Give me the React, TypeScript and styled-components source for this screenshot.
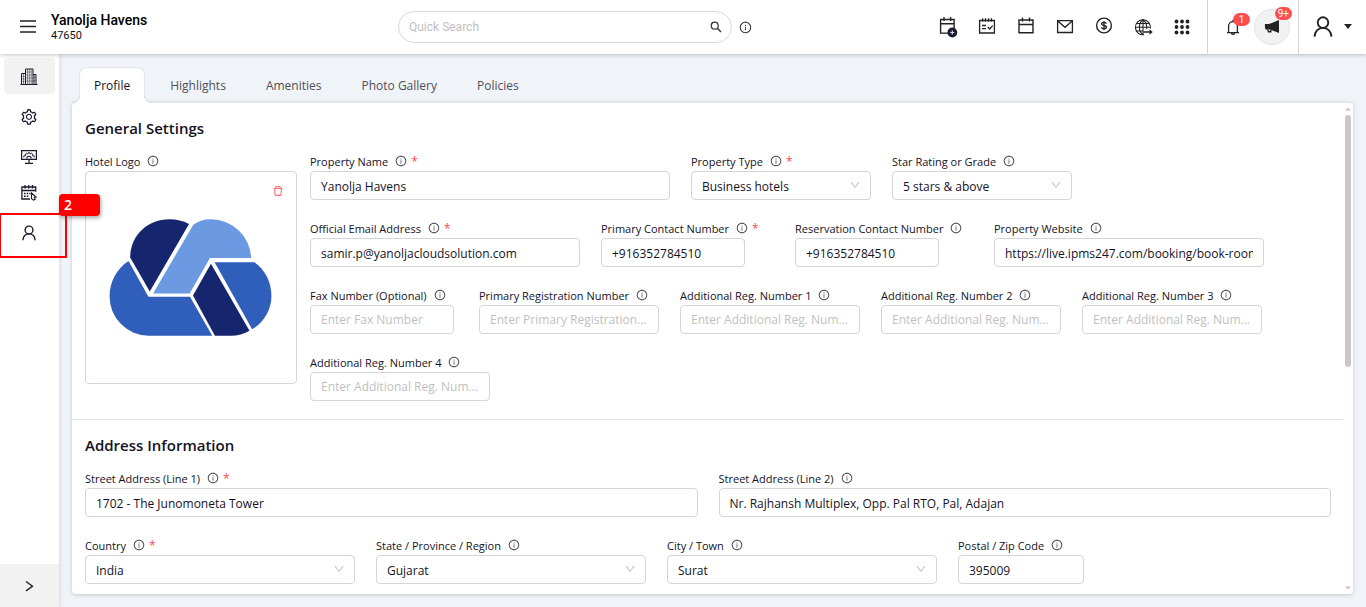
import React from "react";
import styled, { createGlobalStyle, css } from "styled-components";
import {
  AiOutlineDelete,
  AiOutlineDown,
  AiOutlineInfoCircle,
  AiOutlineSetting,
} from "react-icons/ai";

const GlobalStyle = createGlobalStyle`
  *, *::before, *::after { box-sizing: border-box; }
  body {
    margin: 0;
    background: #f0f4f8;
    color: #14121f;
    font-family: "Open Sans", "Noto Sans", sans-serif;
    font-size: 11px;
  }
  button, input, select { font: inherit; color: inherit; }
  button { padding: 0; border: 0; background: none; cursor: pointer; }
`;

/* ---------- page shell ---------- */

const Page = styled.div`
  display: flex;
  flex-direction: column;
  height: 100vh;
`;

const Header = styled.header`
  position: relative;
  z-index: 2;
  display: grid;
  grid-template-columns: 378px minmax(0, 1fr) auto;
  align-items: center;
  height: 54px;
  padding-left: 20px;
  background: #fff;
  box-shadow: 0 1px 4px rgba(20, 40, 50, 0.28);
  font-family: Roboto, sans-serif;
  flex: none;
`;

const Brand = styled.div`
  display: flex;
  align-items: center;
  gap: 15px;
`;

const BrandName = styled.div`
  color: #000;
  font-size: 14px;
  font-weight: 500;
  line-height: 16px;
`;

const BrandCode = styled.div`
  color: #111;
  font-size: 11px;
  line-height: 15px;
`;

const IconButton = styled.button`
  display: flex;
  align-items: center;
  justify-content: center;
  color: #222;
`;

const SearchArea = styled.div`
  display: flex;
  align-items: center;
  gap: 7px;
`;

const SearchBox = styled.label`
  display: flex;
  align-items: center;
  width: 334px;
  height: 32px;
  padding: 0 9px 0 10px;
  border: 1px solid #d9d9d9;
  border-radius: 16px;
`;

const SearchInput = styled.input`
  flex: 1;
  min-width: 0;
  padding: 0;
  border: 0;
  outline: 0;
  background: none;
  font-size: 12px;
  &::placeholder { color: #bfbfbf; }
`;

const HeaderRight = styled.div`
  display: flex;
  align-self: stretch;
`;

const Shortcuts = styled.nav`
  display: flex;
  align-items: center;
  gap: 15px;
  padding-right: 13px;
`;

const Alerts = styled.div`
  display: flex;
  align-items: center;
  gap: 9px;
  padding: 0 8px 0 13px;
  border-left: 1px solid #d4d4d4;
  border-right: 1px solid #d4d4d4;
`;

const AlertButton = styled(IconButton)<{ $round?: boolean }>`
  position: relative;
  width: 24px;
  height: 24px;
  ${(p) =>
    p.$round &&
    css`
      width: 36px;
      height: 36px;
      border: 1px solid #e4e4e4;
      border-radius: 50%;
      background: #f2f2f2;
    `}
`;

const Badge = styled.span<{ $top: number; $right: number }>`
  position: absolute;
  top: ${(p) => p.$top}px;
  right: ${(p) => p.$right}px;
  min-width: 17px;
  height: 13px;
  padding: 0 3px;
  border-radius: 7px;
  background: #ff4d4f;
  color: #fff;
  font-size: 10px;
  line-height: 13px;
  text-align: center;
`;

const Account = styled.button`
  display: flex;
  align-items: center;
  gap: 9px;
  padding: 0 14px 0 12px;
  color: #222;
`;

const Body = styled.div`
  display: flex;
  flex: 1;
  min-height: 0;
`;

/* ---------- side navigation ---------- */

const Sidebar = styled.aside`
  position: relative;
  z-index: 1;
  display: flex;
  flex-direction: column;
  justify-content: space-between;
  width: 59px;
  flex: none;
  background: #fff;
  box-shadow: 1px 0 4px rgba(20, 40, 50, 0.12);
`;

const NavList = styled.nav`
  display: flex;
  flex-direction: column;
  gap: 3px;
  padding: 4px;
`;

const NavItem = styled.div`
  position: relative;
`;

const NavButton = styled.button<{ $active?: boolean }>`
  display: flex;
  align-items: center;
  justify-content: center;
  width: 100%;
  height: 36px;
  padding-right: 2px;
  border-radius: 4px;
  background: ${(p) => (p.$active ? "#f2f2f2" : "transparent")};
  color: #1c1a2e;
`;

const Expand = styled.button`
  display: flex;
  align-items: center;
  justify-content: center;
  height: 43px;
  background: #f2f2f2;
  color: #222;
`;

const Highlight = styled.div`
  position: absolute;
  top: -1px;
  left: -5px;
  width: 68px;
  height: 45px;
  border: 2px solid #f00;
  pointer-events: none;
`;

const StepTag = styled.div`
  position: absolute;
  top: -20px;
  left: 55px;
  width: 41px;
  height: 22px;
  padding-left: 5px;
  border-radius: 4px;
  background: #f00;
  box-shadow: 1px 2px 4px rgba(0, 0, 0, 0.35);
  color: #fff;
  font-size: 14px;
  font-weight: 600;
  line-height: 22px;
`;

/* ---------- tabs and panel ---------- */

const Main = styled.main`
  display: flex;
  flex: 1;
  flex-direction: column;
  min-width: 0;
  padding: 13px;
`;

const Tabs = styled.div`
  position: relative;
  z-index: 1;
  display: flex;
  gap: 10px;
  padding-left: 7px;
  margin-bottom: -1px;
`;

const Tab = styled.button<{ $active?: boolean }>`
  position: relative;
  height: 36px;
  padding: 0 14px;
  border: 1px solid transparent;
  border-bottom: 0;
  border-radius: 8px 8px 0 0;
  color: #4f4f58;
  font-size: 12px;
  ${(p) =>
    p.$active &&
    css`
      border-color: #e2e4e7;
      background: #fff;
      color: #14121f;
      &::before,
      &::after {
        content: "";
        position: absolute;
        bottom: 0;
        width: 8px;
        height: 8px;
        border-bottom: 1px solid #d9dce0;
      }
      &::before {
        right: 100%;
        border-right: 1px solid #d9dce0;
        border-bottom-right-radius: 8px;
        box-shadow: 3px 3px 0 #fff;
        clip-path: inset(0 -1px 0 0);
      }
      &::after {
        left: 100%;
        border-left: 1px solid #d9dce0;
        border-bottom-left-radius: 8px;
        box-shadow: -3px 3px 0 #fff;
        clip-path: inset(0 0 0 -1px);
      }
    `}
`;

const Panel = styled.section`
  display: flex;
  flex: 1;
  min-height: 0;
  border-top: 1px solid #dfe1e4;
  border-radius: 4px;
  background: #fff;
  box-shadow: 0 1px 4px rgba(20, 40, 50, 0.2);
`;

const PanelContent = styled.form`
  flex: 1;
  min-width: 0;
  overflow: hidden;
`;

const Scrollbar = styled.div`
  display: flex;
  flex-direction: column;
  align-items: center;
  gap: 4px;
  width: 10px;
  padding: 4px 0;
  color: #c4c4c4;
`;

const Track = styled.div`
  flex: 1;
`;

const Thumb = styled.div`
  width: 6px;
  height: 54%;
  border-radius: 3px;
  background: #c8c8c8;
`;

const Section = styled.section`
  padding: 15px 12px 18px 13px;
  & + & { border-top: 1px solid #e2e4e7; }
`;

const SectionTitle = styled.h2`
  margin: 0 0 15px;
  font-size: 15px;
  font-weight: 600;
  line-height: 20px;
`;

const WithLogo = styled.div`
  display: flex;
  gap: 13px;
`;

const Rows = styled.div`
  display: flex;
  flex: 1;
  flex-direction: column;
  gap: 20px;
  min-width: 0;
`;

const Row = styled.div`
  display: flex;
  gap: 21px;
`;

const Cell = styled.div<{ $width?: number }>`
  ${(p) => (p.$width ? `flex: 0 0 ${p.$width}px;` : "flex: 1;")}
  min-width: 0;
`;

const LabelLine = styled.div`
  display: flex;
  align-items: center;
  height: 18px;
  padding-bottom: 1px;
  white-space: nowrap;
`;

const Info = styled(AiOutlineInfoCircle)`
  flex: none;
  width: 12px;
  height: 12px;
  margin: 0 4px 1px 7px;
  color: #45444f;
`;

const Required = styled.span`
  color: #ff4d4f;
  font-size: 12px;
`;

const control = css`
  display: block;
  width: 100%;
  height: 29px;
  padding: 2px 10px 0;
  border: 1px solid #d4d5d8;
  border-radius: 4px;
  outline: 0;
  background: #fff;
  font-size: 12px;
`;

const Input = styled.input<{ $width?: number }>`
  ${control}
  ${(p) => p.$width && `width: ${p.$width}px;`}
  &::placeholder { color: #bfbfbf; }
  &:placeholder-shown {
    padding-top: 0;
    text-overflow: ellipsis;
  }
`;

const SelectWrap = styled.div`
  position: relative;
`;

const Select = styled.select`
  ${control}
  appearance: none;
`;

const Chevron = styled(AiOutlineDown)`
  position: absolute;
  top: 8px;
  right: 10px;
  width: 12px;
  height: 12px;
  color: #bfbfbf;
  pointer-events: none;
`;

const LogoBox = styled.div`
  position: relative;
  display: flex;
  align-items: center;
  justify-content: center;
  height: 213px;
  padding-right: 2px;
  border: 1px solid #d4d5d8;
  border-radius: 4px;
`;

const DeleteLogo = styled(IconButton)`
  position: absolute;
  top: 13px;
  right: 12px;
  color: #ff4d4f;
`;

/* ---------- drawings ---------- */

type IconProps = { size?: number; children: React.ReactNode; stroke?: number; box?: number };

const Icon = ({ size = 24, box = 24, stroke = 1.4, children }: IconProps) => (
  <svg
    width={size}
    height={size}
    viewBox={`0 0 ${box} ${box}`}
    fill="none"
    stroke="currentColor"
    strokeWidth={stroke}
    aria-hidden="true"
  >
    {children}
  </svg>
);

const MenuIcon = () => (
  <Icon size={16} box={16}>
    <path d="M0 2h16M0 7.500h16M0 13h16" />
  </Icon>
);

const SearchIcon = () => (
  <Icon size={12} box={12} stroke={1.2}>
    <circle cx="4.7" cy="4.7" r="3.500" stroke="#333" />
    <path d="M7.3 7.3l3.700 3.700" stroke="#333" strokeWidth="1.500" />
  </Icon>
);

const CalendarAddIcon = () => (
  <Icon>
    <path d="M4.6 4.500h13.500v13.600h-13.500zM4.6 8.700h13.500M8 2v4M14.600 2v4" />
    <circle cx="16.300" cy="17.500" r="4.900" fill="#1c1a2e" stroke="none" />
    <path d="M16.300 15.500v4M14.300 17.500h4" stroke="#d8d8e8" strokeWidth="1.200" />
  </Icon>
);

const CalendarCheckIcon = () => (
  <Icon>
    <path d="M4.6 5.500h14.800v12.500H4.600zM7.600 3.200v3.600M10.500 3.200v3.600M13.500 3.200v3.600M16.400 3.200v3.600" strokeWidth="1.300" />
    <path d="M7 10.500h4M7 13.600h4M12.700 12l2 2 3-3.400" strokeWidth="1.300" />
  </Icon>
);

const CalendarIcon = () => (
  <Icon>
    <path d="M5 5h14v12.800H5zM5 9.500h14M8.500 2.400v4M15.500 2.400v4" />
  </Icon>
);

const MailIcon = () => (
  <Icon>
    <path d="M4.600 5.700h14.800v11.800H4.600zM4.800 5.900l7.200 6.400 7.200-6.400" strokeWidth="1.300" />
  </Icon>
);

const DollarIcon = () => (
  <Icon>
    <circle cx="12" cy="10.500" r="7.400" />
    <path
      d="M14.400 8.800c-.3-1-1.200-1.500-2.400-1.500-1.400 0-2.400.6-2.400 1.700 0 2.100 4.900.9 4.900 3.100 0 1-1 1.700-2.500 1.700-1.300 0-2.300-.6-2.500-1.700M12 5.900v9.300"
      strokeWidth="1.300"
    />
  </Icon>
);

const GlobeIcon = () => (
  <Icon stroke={1.1}>
    <path d="M19.300 13.500A7.500 7.500 0 1 0 13 19.700" />
    <path d="M12 19.700C7.300 17 7.300 7.500 12 4.800C15 6.700 16 10 15.700 14M12 4.800v14.900M4.500 12.200h14.800M5.700 8.500h12.600M5.700 16h6" />
    <path d="M12.500 17h6.500" strokeWidth="1.500" />
    <path d="M18.500 14.300l3.200 2.700-3.200 2.700z" fill="currentColor" stroke="none" />
  </Icon>
);

const GridIcon = () => (
  <Icon>
    {[6.5, 12, 17.5].map((y) =>
      [6.5, 12, 17.5].map((x) => (
        <circle key={`${x}-${y}`} cx={x} cy={y} r="1.900" fill="currentColor" stroke="none" />
      ))
    )}
  </Icon>
);

const BellIcon = () => (
  <Icon stroke={1.3}>
    <path d="M7.600 17.500V11a4.400 4.400 0 0 1 8.800 0v6.500M6 17.700h12M12 4.800v2M10.400 18.200a1.700 1.700 0 0 0 3.200 0" />
  </Icon>
);

const MegaphoneIcon = () => (
  <Icon size={18} box={18}>
    <path d="M2 6h4.200L16 2v13l-9-3.400H2.600Q1.500 9 2 6z" fill="currentColor" stroke="none" />
    <path d="M4.600 11.500l1 2.300h2.200v-2" />
  </Icon>
);

const UserIcon = () => (
  <Icon stroke={1.9}>
    <circle cx="12" cy="7.600" r="5.300" />
    <path d="M3.500 21.600c.3-5 3.600-8.700 8.500-8.700s8.200 3.700 8.500 8.700" />
  </Icon>
);

const NavUserIcon = () => (
  <Icon>
    <circle cx="12" cy="10" r="3.900" />
    <path d="M5.900 20.200c.3-3.700 2.600-6.300 6.100-6.300s5.800 2.600 6.100 6.300" />
  </Icon>
);

const CaretIcon = () => (
  <svg width="8" height="6" viewBox="0 0 8 6" aria-hidden="true">
    <path d="M0 0h8L4 5z" fill="currentColor" />
  </svg>
);

const BuildingIcon = () => (
  <Icon stroke={1}>
    <path d="M8.500 20.500v-15.500h7.500v15.500M4.500 20.500v-11h4M16 10.500h3v10M3.500 20.500h17" />
    <path d="M10.500 5v15M12.300 5v15M14.200 5v15M6.500 10v10M17.500 11v9" strokeWidth="1" opacity="0.500" />
    <path d="M9 8h7M9 11h7M9 14h7M9 17h7M5 12.500h3M5 15h3M5 17.500h3M16 13.500h3M16 16.500h3" strokeWidth="0.700" opacity="0.500" />
  </Icon>
);

const GearIcon = () => (
  <Icon stroke={0}>
    <AiOutlineSetting x={3} y={5} size={18} />
  </Icon>
);

const MonitorIcon = () => (
  <Icon stroke={1.2}>
    <path d="M4.600 8.600h14.800v8.800H4.600zM12 18v3.300M8 21.400h8" />
    <path d="M6.800 15.400v-1.500l1.900-.3-.4-1.500 1.300-.9 1.100.9.500-1.300h1.600l.5 1.300 1.100-.9 1.300.9-.4 1.500 1.900.3v1.500" strokeWidth="1" />
    <path d="M9.800 16.500a2.200 2.200 0 0 1 4.400 0" strokeWidth="1.100" />
  </Icon>
);

const CalendarPickIcon = () => (
  <Icon stroke={1.3}>
    <path d="M13 18H4.900V6h13.800v4.800M4.900 9.500h13.800M8 4v3.500M11.700 4v3.500M15.500 4v3.500" />
    <path d="M7 12.500h1.600M9.700 12.500h1.600M12.300 12.500h1.300M7 15.200h1.600M9.700 15.200h1.600" strokeWidth="1.500" />
    <path d="M14.500 12l4.500 4-1.700.4.900 1.900-1.800.8-1.900-1.300z" strokeWidth="1.100" />
  </Icon>
);

const ExpandIcon = () => (
  <Icon size={12} box={12}>
    <path d="M2 1.500l6.500 4.700-6.500 4.700" />
  </Icon>
);

const CloudLogo = () => (
  <svg width="163" height="117" viewBox="99 206 489 352" role="img" aria-label="Hotel logo">
    <path fill="#16266e" d="M162 322C162 256 214 207 280 207Q312 207 339 221L221 424Z" />
    <path fill="#6b99e2" d="M352 223Q376 207 405 207A121 121 0 0 1 526 323H402L341 430H231Z" />
    <path fill="#2f5fbb" d="M157 332L217 440H342L409 557H218A118 118 0 0 1 100 438C100 395 122 355 157 332Z" />
    <path fill="#16266e" d="M405 341L521 542Q495 557 466 557H417L351 436Z" />
    <path fill="#2f5fbb" d="M416 336H536C567 358 587 395 587 438C587 480 564 517 529 538Z" />
  </svg>
);

/* ---------- form parts ---------- */

type FieldProps = {
  id: string;
  label: string;
  required?: boolean;
  width?: number;
  inputWidth?: number;
  value?: string;
  placeholder?: string;
  select?: boolean;
};

const Field = ({ id, label, required, width, inputWidth, value, placeholder, select }: FieldProps) => (
  <Cell $width={width}>
    <LabelLine>
      <label htmlFor={id}>{label}</label>
      <Info />
      {required && <Required>*</Required>}
    </LabelLine>
    {select ? (
      <SelectWrap>
        <Select id={id} defaultValue={value}>
          <option>{value}</option>
        </Select>
        <Chevron />
      </SelectWrap>
    ) : (
      <Input id={id} $width={inputWidth} defaultValue={value} placeholder={placeholder} />
    )}
  </Cell>
);

const shortcuts = [
  { name: "Add reservation", icon: <CalendarAddIcon /> },
  { name: "Bookings", icon: <CalendarCheckIcon /> },
  { name: "Calendar", icon: <CalendarIcon /> },
  { name: "Mail", icon: <MailIcon /> },
  { name: "Rates", icon: <DollarIcon /> },
  { name: "Web", icon: <GlobeIcon /> },
  { name: "Apps", icon: <GridIcon /> },
];

const navItems = [
  { name: "Property", icon: <BuildingIcon />, active: true },
  { name: "Settings", icon: <GearIcon /> },
  { name: "Display", icon: <MonitorIcon /> },
  { name: "Reservations", icon: <CalendarPickIcon /> },
  { name: "Users", icon: <NavUserIcon />, step: "2" },
];

const tabs = ["Profile", "Highlights", "Amenities", "Photo Gallery", "Policies"];

export default function App() {
  return (
    <>
      <GlobalStyle />
      <Page>
        <Header>
          <Brand>
            <IconButton aria-label="Menu">
              <MenuIcon />
            </IconButton>
            <div>
              <BrandName>Yanolja Havens</BrandName>
              <BrandCode>47650</BrandCode>
            </div>
          </Brand>
          <SearchArea>
            <SearchBox>
              <SearchInput aria-label="Quick Search" placeholder="Quick Search" />
              <SearchIcon />
            </SearchBox>
            <IconButton aria-label="Search help">
              <AiOutlineInfoCircle size={13} />
            </IconButton>
          </SearchArea>
          <HeaderRight>
            <Shortcuts>
              {shortcuts.map((s) => (
                <IconButton key={s.name} aria-label={s.name}>
                  {s.icon}
                </IconButton>
              ))}
            </Shortcuts>
            <Alerts>
              <AlertButton aria-label="Notifications">
                <BellIcon />
                <Badge $top={-2} $right={-5}>1</Badge>
              </AlertButton>
              <AlertButton $round aria-label="Announcements">
                <MegaphoneIcon />
                <Badge $top={-3} $right={-3}>9+</Badge>
              </AlertButton>
            </Alerts>
            <Account aria-label="Account">
              <UserIcon />
              <CaretIcon />
            </Account>
          </HeaderRight>
        </Header>
        <Body>
          <Sidebar>
            <NavList>
              {navItems.map((n) => (
                <NavItem key={n.name}>
                  <NavButton $active={n.active} aria-label={n.name}>
                    {n.icon}
                  </NavButton>
                  {n.step && (
                    <>
                      <Highlight />
                      <StepTag>{n.step}</StepTag>
                    </>
                  )}
                </NavItem>
              ))}
            </NavList>
            <Expand aria-label="Expand">
              <ExpandIcon />
            </Expand>
          </Sidebar>
          <Main>
            <Tabs role="tablist">
              {tabs.map((t, i) => (
                <Tab key={t} role="tab" aria-selected={i === 0} $active={i === 0}>
                  {t}
                </Tab>
              ))}
            </Tabs>
            <Panel>
              <PanelContent>
                <Section>
                  <SectionTitle>General Settings</SectionTitle>
                  <WithLogo>
                    <Cell $width={212}>
                      <LabelLine>
                        <span>Hotel Logo</span>
                        <Info />
                      </LabelLine>
                      <LogoBox>
                        <CloudLogo />
                        <DeleteLogo type="button" aria-label="Delete logo">
                          <AiOutlineDelete size={12} />
                        </DeleteLogo>
                      </LogoBox>
                    </Cell>
                    <Rows>
                      <Row>
                        <Field id="name" label="Property Name" required width={360} value="Yanolja Havens" />
                        <Field id="type" label="Property Type" required width={180} value="Business hotels" select />
                        <Field id="grade" label="Star Rating or Grade" width={180} value="5 stars & above" select />
                      </Row>
                      <Row>
                        <Field id="email" label="Official Email Address" required width={270} value="samir.p@yanoljacloudsolution.com" />
                        <Field id="phone" label="Primary Contact Number" required width={173} inputWidth={144} value="+916352784510" />
                        <Field id="resphone" label="Reservation Contact Number" width={178} inputWidth={144} value="+916352784510" />
                        <Field id="site" label="Property Website" width={270} value="https://live.ipms247.com/booking/book-rooms" />
                      </Row>
                      <Row>
                        <Field id="fax" label="Fax Number (Optional)" width={148} inputWidth={144} placeholder="Enter Fax Number" />
                        <Field id="reg" label="Primary Registration Number" width={180} placeholder="Enter Primary Registration Number" />
                        <Field id="reg1" label="Additional Reg. Number 1" width={180} placeholder="Enter Additional Reg. Number 1" />
                        <Field id="reg2" label="Additional Reg. Number 2" width={180} placeholder="Enter Additional Reg. Number 2" />
                        <Field id="reg3" label="Additional Reg. Number 3" width={180} placeholder="Enter Additional Reg. Number 3" />
                      </Row>
                      <Row>
                        <Field id="reg4" label="Additional Reg. Number 4" width={180} placeholder="Enter Additional Reg. Number 4" />
                      </Row>
                    </Rows>
                  </WithLogo>
                </Section>
                <Section>
                  <SectionTitle>Address Information</SectionTitle>
                  <Rows>
                    <Row>
                      <Field id="street1" label="Street Address (Line 1)" required value="1702 - The Junomoneta Tower" />
                      <Field id="street2" label="Street Address (Line 2)" value="Nr. Rajhansh Multiplex, Opp. Pal RTO, Pal, Adajan" />
                    </Row>
                    <Row>
                      <Field id="country" label="Country" required width={270} value="India" select />
                      <Field id="state" label="State / Province / Region" width={270} value="Gujarat" select />
                      <Field id="city" label="City / Town" width={270} value="Surat" select />
                      <Field id="zip" label="Postal / Zip Code" width={126} value="395009" />
                    </Row>
                  </Rows>
                </Section>
              </PanelContent>
              <Scrollbar aria-hidden="true">
                <svg width="6" height="4" viewBox="0 0 6 4">
                  <path d="M0 3.500L3 0.500L6 3.500z" fill="currentColor" />
                </svg>
                <Track>
                  <Thumb />
                </Track>
                <svg width="6" height="4" viewBox="0 0 6 4">
                  <path d="M0 0.500L3 3.500L6 0.500z" fill="currentColor" />
                </svg>
              </Scrollbar>
            </Panel>
          </Main>
        </Body>
      </Page>
    </>
  );
}
